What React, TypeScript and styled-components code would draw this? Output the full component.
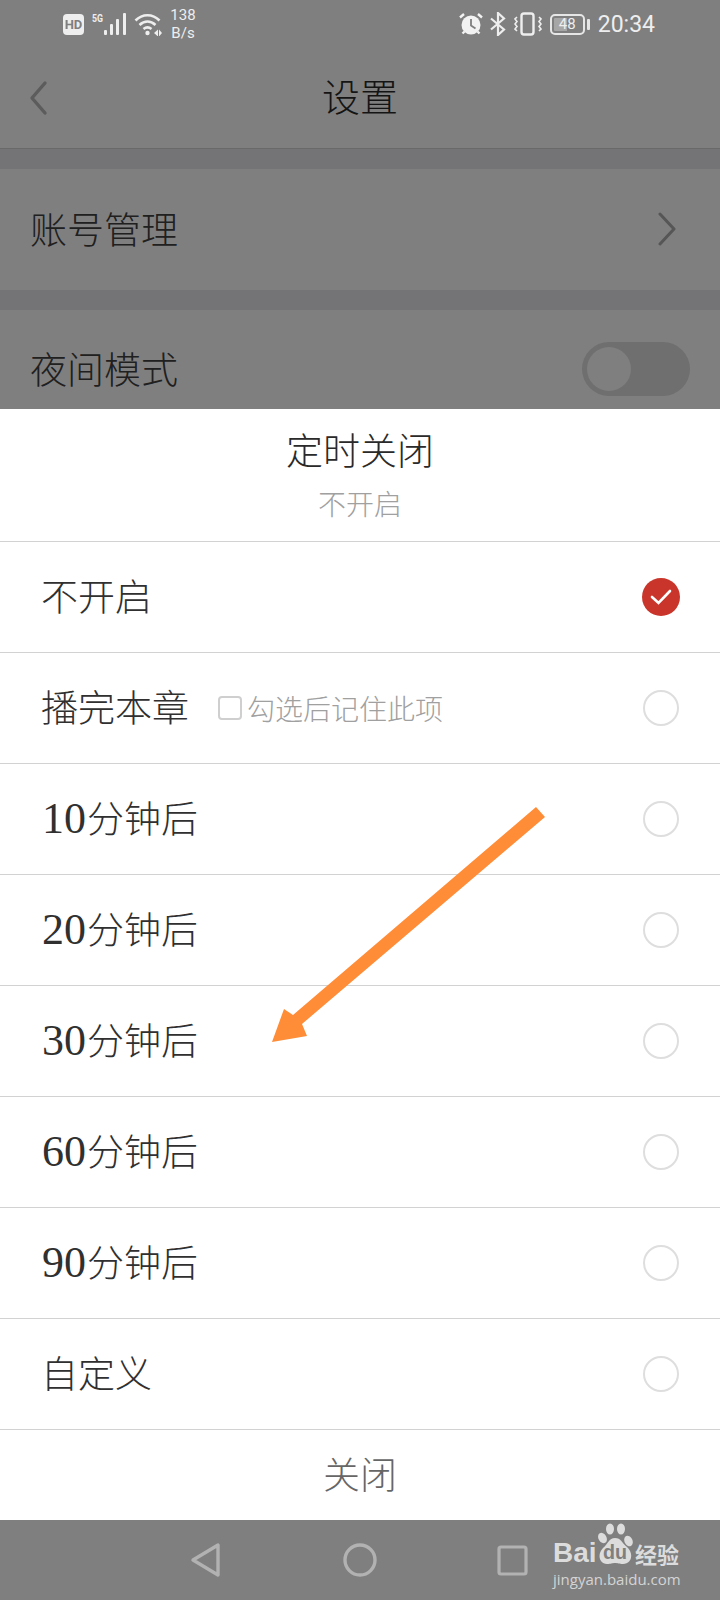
import React, {FunctionComponent} from 'react';
import styled, {createGlobalStyle} from 'styled-components';

const CJK = '"Noto Sans CJK SC", "Noto Sans", sans-serif';

const GlobalStyle = createGlobalStyle`
  html, body {
    margin: 0;
    padding: 0;
    background: #7f7f7f;
  }
  * {
    box-sizing: border-box;
  }
`;

const Screen = styled.div`
  position: relative;
  width: 720px;
  height: 1600px;
  overflow: hidden;
  display: flex;
  flex-direction: column;
  font-family: ${CJK};
`;

/* dimmed settings page behind the sheet */
const Backdrop = styled.div`
  height: 409px;
  overflow: hidden;
  background: #7f7f7f;
  flex: none;
`;

const StatusBar = styled.div`
  height: 48px;
  display: flex;
  align-items: center;
  justify-content: space-between;
  padding: 0 65px 0 63px;
  color: #eeeeee;
  font-family: Roboto, sans-serif;
`;

const StatusGroup = styled.div`
  display: flex;
  align-items: center;
`;

const HdBadge = styled.span`
  width: 21px;
  height: 21px;
  border-radius: 4px;
  background: #eeeeee;
  color: #7f7f7f;
  font-size: 13px;
  font-weight: 700;
  line-height: 21px;
  text-align: center;
  margin-right: 8px;
`;

const Speed = styled.span`
  margin-left: 8px;
  width: 26px;
  font-size: 15px;
  line-height: 18px;
  text-align: center;
`;

const Battery = styled.span`
  position: relative;
  width: 35px;
  height: 21px;
  margin: 0 2px 0 8px;
  border: 2px solid #e6e6e6;
  border-radius: 5px;
  font-size: 15px;
  text-align: center;
  color: #eeeeee;
  background: linear-gradient(90deg, #a6a6a6 48%, transparent 48%);
  background-clip: content-box;
  padding: 2px;
  line-height: 13px;
`;

const BatteryNub = styled.span`
  width: 3px;
  height: 11px;
  border-radius: 1px;
  background: #e6e6e6;
`;

const Clock = styled.span`
  margin-left: 8px;
  font-size: 23px;
`;

const Header = styled.div`
  height: 101px;
  display: flex;
  align-items: center;
  justify-content: center;
  position: relative;
  padding-bottom: 8px;
  border-bottom: 1px solid #696969;
  color: #141414;
  font-size: 38px;
  font-weight: 300;
`;

const BackIcon = styled.svg`
  position: absolute;
  left: 28px;
  top: 32px;
`;

const Band = styled.div`
  height: 20px;
  background: #747476;
`;

const SettingRow = styled.div<{$height: number}>`
  height: ${(p) => p.$height}px;
  display: flex;
  align-items: center;
  justify-content: space-between;
  padding: 0 30px 4px;
  color: #202020;
  font-size: 37px;
  font-weight: 300;
`;

const RowChevron = styled.svg`
  margin-right: 13px;
  margin-top: 2px;
`;

const Toggle = styled.div`
  width: 108px;
  height: 54px;
  margin-top: 2px;
  border-radius: 27px;
  background: #6f6f6f;
  padding: 5px;
`;

const ToggleKnob = styled.div`
  width: 44px;
  height: 44px;
  border-radius: 50%;
  background: #7f7f7f;
`;

const Sheet = styled.div`
  flex: none;
  height: 1111px;
  background: #ffffff;
  display: flex;
  flex-direction: column;
`;

const SheetHead = styled.div`
  height: 133px;
  display: flex;
  flex-direction: column;
  align-items: center;
  padding-top: 19px;
  border-bottom: 1px solid #d2d2d2;
`;

const SheetTitle = styled.div`
  font-size: 37px;
  line-height: 42px;
  font-weight: 300;
  color: #2a2a2a;
`;

const SheetSub = styled.div`
  margin-top: 16px;
  font-size: 28px;
  line-height: 34px;
  font-weight: 300;
  color: #a0a0a0;
`;

const Option = styled.div`
  height: 111px;
  flex: none;
  display: flex;
  align-items: center;
  padding: 0 41px 0 41px;
  border-bottom: 1px solid #d2d2d2;
`;

const OptionLabel = styled.span`
  position: relative;
  top: -2px;
  font-size: 37px;
  font-weight: 300;
  color: #303030;
  display: flex;
  align-items: baseline;
`;

const Digits = styled.span`
  font-family: "Liberation Serif", serif;
  font-size: 44px;
  margin-left: 1px;
  margin-right: 1px;
`;

const Remember = styled.span`
  margin-left: 29px;
  display: flex;
  align-items: center;
  gap: 5px;
  font-size: 28px;
  font-weight: 300;
  color: #a0a0a0;
`;

const CheckBox = styled.span`
  width: 24px;
  height: 24px;
  border: 2px solid #cfcfcf;
  border-radius: 4px;
`;

const Radio = styled.span<{$checked?: boolean}>`
  margin-left: auto;
  width: ${(p) => (p.$checked ? 38 : 36)}px;
  height: ${(p) => (p.$checked ? 38 : 36)}px;
  margin-right: ${(p) => (p.$checked ? -1 : 0)}px;
  border-radius: 50%;
  border: ${(p) => (p.$checked ? 'none' : '2px solid #dedede')};
  background: ${(p) => (p.$checked ? '#c9352a' : 'transparent')};
  display: flex;
  align-items: center;
  justify-content: center;
`;

const CloseRow = styled.div`
  flex: 1;
  display: flex;
  align-items: center;
  justify-content: center;
  padding-bottom: 4px;
  font-size: 37px;
  font-weight: 300;
  color: #666666;
`;

const NavBar = styled.div`
  position: relative;
  flex: 1;
  background: #7f7f7f;
  display: flex;
  align-items: center;
  padding: 0 0 0 190px;
`;

const NavIcon = styled.svg<{$gap: number}>`
  margin-right: ${(p) => p.$gap}px;
`;

const Watermark = styled.div`
  position: absolute;
  left: 553px;
  top: 3px;
  width: 130px;
  color: #dcdcdc;
`;

const WatermarkTop = styled.div`
  display: flex;
  align-items: flex-end;
  height: 42px;
`;

const BaiText = styled.span`
  font-family: "Liberation Sans", sans-serif;
  font-weight: 700;
  font-size: 28px;
  line-height: 24px;
  width: 44px;
`;

const Jingyan = styled.span`
  font-size: 22px;
  line-height: 24px;
  font-weight: 700;
  margin-left: 2px;
`;

const WatermarkUrl = styled.div`
  margin-top: 3px;
  font-family: "Open Sans", sans-serif;
  font-size: 15px;
  line-height: 22px;
  color: #d4d4d4;
  white-space: nowrap;
`;

const ArrowMark = styled.svg`
  position: absolute;
  left: 0;
  top: 0;
  pointer-events: none;
`;

const options = [
  {label: '不开启', checked: true},
  {label: '播完本章', remember: true},
  {num: '10', label: '分钟后'},
  {num: '20', label: '分钟后'},
  {num: '30', label: '分钟后'},
  {num: '60', label: '分钟后'},
  {num: '90', label: '分钟后'},
  {label: '自定义'}
];

const SignalIcon = () => (
  <svg width="36" height="24" viewBox="0 0 36 24" fill="#eeeeee">
    <text x="0" y="10" fontSize="10" fontWeight="700" fontFamily="Roboto, sans-serif" textLength="11" lengthAdjust="spacingAndGlyphs">5G</text>
    <rect x="12" y="18" width="3" height="5" rx="1"/>
    <rect x="18" y="12" width="3" height="11" rx="1"/>
    <rect x="24" y="7" width="3" height="16" rx="1"/>
    <rect x="31" y="1" width="3" height="22" rx="1"/>
  </svg>
);

const WifiIcon = () => (
  <svg width="28" height="24" viewBox="0 0 28 24" fill="none" stroke="#eeeeee" strokeWidth="2.6" style={{marginLeft: 6}}>
    <path d="M1.5 8.5C8.5 1.5 18.5 1.5 25.5 8.5"/>
    <path d="M5.5 13C10.5 8.5 16.5 8.5 21.5 13"/>
    <path d="M9.5 17C12 15 15 15 17.5 17"/>
    <circle cx="13.5" cy="21" r="2.2" fill="#eeeeee" stroke="none"/>
    <path d="M20 21l4-3.5v7zM28 21l-3 -3.5v7z" fill="#eeeeee" stroke="none"/>
  </svg>
);

const AlarmIcon = () => (
  <svg width="24" height="24" viewBox="0 0 24 24">
    <circle cx="12" cy="13" r="9.5" fill="#f2f2f2"/>
    <path d="M12 7v6.5l4.5 3" fill="none" stroke="#7f7f7f" strokeWidth="1.8"/>
    <path d="M1 5.5L5 2M23 5.5L19 2M3.5 21.5l2-2M20.5 21.5l-2-2" stroke="#f2f2f2" strokeWidth="2.4" fill="none"/>
  </svg>
);

const BluetoothIcon = () => (
  <svg width="16" height="24" viewBox="0 0 16 24" fill="none" stroke="#eeeeee" strokeWidth="2.2" style={{marginLeft: 7}}>
    <path d="M1 6.5L14 17.5L8 23V1L14 6.5L1 17.5"/>
  </svg>
);

const VibrateIcon = () => (
  <svg width="28" height="24" viewBox="0 0 28 24" fill="none" stroke="#eeeeee" style={{marginLeft: 8}}>
    <rect x="7.5" y="1.5" width="12" height="21" rx="2.5" strokeWidth="2.4"/>
    <path d="M3 5l-2 2 2 2.5-2 2.5 2 2.5-2 2.5 2 2M25 5l2 2-2 2.5 2 2.5-2 2.5 2 2.5-2 2" strokeWidth="1.6"/>
  </svg>
);

const Paw = () => (
  <svg width="36" height="42" viewBox="0 0 36 42" fill="#dcdcdc">
    <ellipse cx="13" cy="6" rx="4" ry="5.5"/>
    <ellipse cx="24" cy="6" rx="4" ry="5.5"/>
    <ellipse cx="5.5" cy="15" rx="4" ry="5.5" transform="rotate(-30 5.5 15)"/>
    <ellipse cx="31.5" cy="18" rx="4" ry="5.5" transform="rotate(-25 31.5 18)"/>
    <path d="M18 15C24 15 25 20 30 24C37 30 35 41 26 41C22 41 21 40 18 40C15 40 14 41 10 41C2 41 0 31 6 25C11 21 12 15 18 15Z"/>
    <text x="18" y="36" textAnchor="middle" fontSize="20" fontWeight="700" fill="#7f7f7f" fontFamily="Liberation Sans, sans-serif" textLength="24" lengthAdjust="spacingAndGlyphs">du</text>
  </svg>
);

const App: FunctionComponent = () => (
  <Screen>
    <GlobalStyle/>
    <Backdrop>
      <StatusBar>
        <StatusGroup>
          <HdBadge>HD</HdBadge>
          <SignalIcon/>
          <WifiIcon/>
          <Speed>138<br/>B/s</Speed>
        </StatusGroup>
        <StatusGroup>
          <AlarmIcon/>
          <BluetoothIcon/>
          <VibrateIcon/>
          <Battery>48</Battery>
          <BatteryNub/>
          <Clock>20:34</Clock>
        </StatusGroup>
      </StatusBar>
      <Header>
        <BackIcon width="20" height="36" viewBox="0 0 20 36" fill="none" stroke="#5c5c5c" strokeWidth="3.4" strokeLinecap="round" strokeLinejoin="round">
          <path d="M17 3L4 18L17 33"/>
        </BackIcon>
        设置
      </Header>
      <Band/>
      <SettingRow $height={121}>
        账号管理
        <RowChevron width="20" height="34" viewBox="0 0 20 34" fill="none" stroke="#565656" strokeWidth="3" strokeLinecap="round" strokeLinejoin="round">
          <path d="M3 2L17 17L3 32"/>
        </RowChevron>
      </SettingRow>
      <Band/>
      <SettingRow $height={120}>
        夜间模式
        <Toggle><ToggleKnob/></Toggle>
      </SettingRow>
    </Backdrop>

    <Sheet>
      <SheetHead>
        <SheetTitle>定时关闭</SheetTitle>
        <SheetSub>不开启</SheetSub>
      </SheetHead>
      {options.map((item) => (
        <Option key={item.label + (item.num || '')}>
          <OptionLabel>
            {item.num && <Digits>{item.num}</Digits>}
            {item.label}
          </OptionLabel>
          {item.remember && (
            <Remember><CheckBox/>勾选后记住此项</Remember>
          )}
          <Radio $checked={item.checked}>
            {item.checked && (
              <svg width="24" height="18" viewBox="0 0 24 18" fill="none" stroke="#ffffff" strokeWidth="2.6" strokeLinecap="round">
                <path d="M3 9L9.5 15L21 3"/>
              </svg>
            )}
          </Radio>
        </Option>
      ))}
      <CloseRow>关闭</CloseRow>
    </Sheet>

    <NavBar>
      <NavIcon $gap={120} width="32" height="36" viewBox="0 0 32 36" fill="none" stroke="#b2b2b2" strokeWidth="3.4" strokeLinejoin="round">
        <path d="M28 3V33L3 18Z"/>
      </NavIcon>
      <NavIcon $gap={119} width="36" height="36" viewBox="0 0 36 36" fill="none" stroke="#b2b2b2" strokeWidth="3.4">
        <circle cx="18" cy="18" r="15"/>
      </NavIcon>
      <NavIcon $gap={0} width="31" height="31" viewBox="0 0 31 31" fill="none" stroke="#b2b2b2" strokeWidth="3.2" strokeLinejoin="round">
        <rect x="2" y="2" width="27" height="27" rx="2"/>
      </NavIcon>
      <Watermark>
        <WatermarkTop>
          <BaiText>Bai</BaiText>
          <Paw/>
          <Jingyan>经验</Jingyan>
        </WatermarkTop>
        <WatermarkUrl>jingyan.baidu.com</WatermarkUrl>
      </Watermark>
    </NavBar>

    <ArrowMark width="720" height="1600" viewBox="0 0 720 1600">
      <path d="M536 807L545 817L302 1024L307 1036L272 1042L284 1009L293 1015Z" fill="#ff8c37"/>
    </ArrowMark>
  </Screen>
);

export default App;
